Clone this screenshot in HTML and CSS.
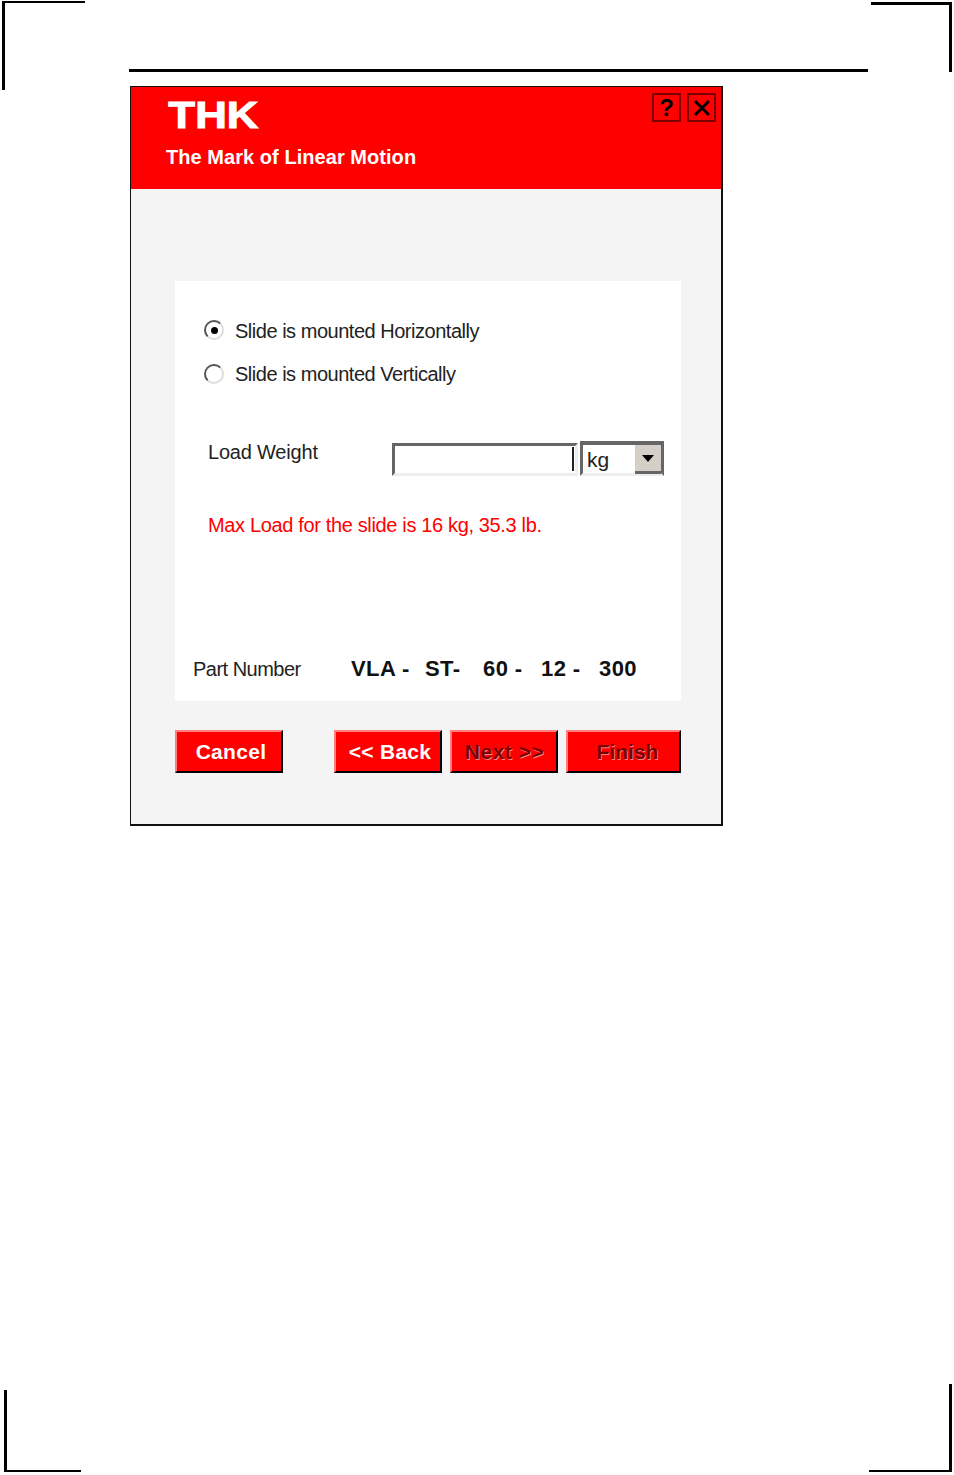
FILE: index.html
```html
<!DOCTYPE html>
<html lang="en">
<head>
<meta charset="utf-8">
<title>THK</title>
<link rel="stylesheet" href="styles.css">
</head>
<body>
<div class="crop tl"></div>
<div class="crop tr"></div>
<div class="crop bl"></div>
<div class="crop br"></div>
<div class="page">
  <div class="rule"></div>
  <div class="dialog">
    <header class="banner">
      <div class="brand">
        <div class="logo">THK</div>
        <div class="tagline">The Mark of Linear Motion</div>
      </div>
      <div class="winbtns">
        <span class="winbtn">?</span>
        <span class="winbtn">
          <svg width="20" height="20" viewBox="0 0 20 20"><path d="M3 3 L17 17 M17 3 L3 17" stroke="#000" stroke-width="3" fill="none"/></svg>
        </span>
      </div>
    </header>
    <main class="body">
      <section class="panel">
        <div class="radio-row first">
          <span class="radio checked"></span>
          <span class="label">Slide is mounted Horizontally</span>
        </div>
        <div class="radio-row">
          <span class="radio"></span>
          <span class="label">Slide is mounted Vertically</span>
        </div>
        <div class="load-row">
          <span class="load-label">Load Weight</span>
          <div class="input"><span class="caret"></span></div>
          <div class="select">
            <span class="select-value">kg</span>
            <span class="select-btn"><svg width="12" height="7" viewBox="0 0 12 7"><path d="M0 0 H12 L6 7 Z" fill="#000"/></svg></span>
          </div>
        </div>
        <p class="warning">Max Load for the slide is 16 kg, 35.3 lb.</p>
        <div class="part-row">
          <span class="part-label">Part Number</span>
          <div class="part-code">
            <span class="seg s1">VLA -</span>
            <span class="seg s2">ST-</span>
            <span class="seg s3">60 -</span>
            <span class="seg s4">12 -</span>
            <span class="seg s5">300</span>
          </div>
        </div>
      </section>
      <div class="actions">
        <button class="btn cancel">Cancel</button>
        <div class="nav">
          <button class="btn back">&lt;&lt; Back</button>
          <button class="btn next off">Next &gt;&gt;</button>
          <button class="btn finish off">Finish</button>
        </div>
      </div>
    </main>
  </div>
</div>
</body>
</html>
```
FILE: styles.css
```css
* { box-sizing: border-box; }
html, body { margin: 0; padding: 0; background: #fff; }
body { width: 954px; height: 1475px; position: relative; overflow: hidden; font-family: "Liberation Sans", Arial, sans-serif; color: #111; }

.crop { position: absolute; border: 0 solid #000; }
.tl { left: 2px; top: 1px; width: 83px; height: 89px; border-top-width: 2px; border-left-width: 3px; }
.tr { left: 871px; top: 2px; width: 81px; height: 70px; border-top-width: 3px; border-right-width: 3px; }
.bl { left: 4px; top: 1390px; width: 77px; height: 82px; border-bottom-width: 2px; border-left-width: 3px; }
.br { left: 869px; top: 1384px; width: 83px; height: 88px; border-bottom-width: 2px; border-right-width: 3px; }

.page { padding: 69px 0 0 129px; }
.rule { width: 739px; height: 3px; background: #000; }

.dialog { margin: 14px 0 0 1px; width: 593px; height: 740px; border: 2px solid #111; border-width: 1px 2px 2px 1px; background: #f4f4f4; display: flex; flex-direction: column; }
.banner { height: 102px; background: #f00; display: flex; justify-content: space-between; padding: 7px 5px 0 35px; flex: none; }
.logo { font-weight: 700; font-size: 37px; line-height: 44px; color: #fff; transform: scaleX(1.185); transform-origin: left center; -webkit-text-stroke: 1px #fff; padding-left: 2px; }
.tagline { font-size: 20px; font-weight: 700; line-height: 24px; color: #fff; margin-top: 7px; letter-spacing: 0.05px; white-space: nowrap; }
.winbtns { display: flex; gap: 6px; margin-top: -1px; }
.winbtn { width: 29px; height: 29px; border: 2px solid #7a0000; display: flex; align-items: center; justify-content: center; font-weight: 700; font-size: 24px; line-height: 1; color: #000; }

.body { flex: 1; padding: 92px 40px 0 44px; display: flex; flex-direction: column; }
.panel { height: 420px; background: #fff; padding: 38px 0 0 0; display: flex; flex-direction: column; }
.radio-row { display: flex; align-items: center; height: 24px; padding-left: 28px; }
.radio-row + .radio-row { margin-top: 19px; }
.radio { width: 20px; height: 20px; border-radius: 50%; border: 2px solid; border-color: #555 #ddd #ddd #555; background: #fff; display: flex; align-items: center; justify-content: center; margin: 0 12px 0 1px; flex: none; }
.label { margin-left: -1px; }
.first .radio { margin-top: -2px; }
.radio.checked::after { content: ""; width: 7px; height: 7px; border-radius: 50%; background: #000; }
.label, .load-label, .part-label, .warning { font-size: 20px; letter-spacing: -0.48px; line-height: 24px; white-space: nowrap; color: #222; }

.load-row { display: flex; align-items: flex-start; margin-top: 54px; padding-left: 33px; height: 36px; }
.load-label { width: 184px; letter-spacing: -0.2px; }
.input { width: 186px; height: 33px; margin-top: 3px; border: 3px solid; border-color: #666 #eee #eee #666; background: #fff; position: relative; }
.caret { position: absolute; right: 1px; top: 1px; width: 2px; height: 24px; background: #222; }
.select { width: 84px; height: 35px; margin: 1px 0 0 2px; border: 3px solid #666; border-bottom-color: #eee; border-top-width: 4px; background: #fff; display: flex; justify-content: space-between; }
.select-value { font-size: 21px; line-height: 29px; padding-left: 4px; color: #222; }
.select-btn { width: 26px; height: 26px; background: #d4d0c8; display: flex; align-items: center; justify-content: center; box-shadow: 0 3px 0 #666; }

.warning { margin: 37px 0 0 33px; color: #f00; letter-spacing: -0.35px; }
.part-row { display: flex; align-items: center; margin-top: 120px; padding-left: 18px; }
.part-label { width: 158px; letter-spacing: -0.52px; }
.part-code { font-weight: 700; font-size: 22px; line-height: 24px; color: #111; display: flex; letter-spacing: 0.4px; white-space: nowrap; }
.seg { display: block; }
.s1 { width: 74px; }
.s2, .s3, .s4 { width: 58px; }

.actions { display: flex; justify-content: space-between; margin-top: 29px; }
.nav { display: flex; gap: 8px; }
.btn { height: 43px; width: 108px; background: #f00; color: #fff; font-family: "Liberation Sans", Arial, sans-serif; font-weight: 700; font-size: 21px; letter-spacing: 0.3px; padding: 0; border: 2px solid; border-color: #ff8080 #000 #000 #ff8080; }
.cancel, .back { padding-left: 4px; }
.next { padding-left: 1px; letter-spacing: 0.5px; }
.finish { width: 115px; padding-left: 8px; letter-spacing: 0; }
.off { color: #7a0000; text-shadow: 1px 1px 0 #ff8080; }
```
